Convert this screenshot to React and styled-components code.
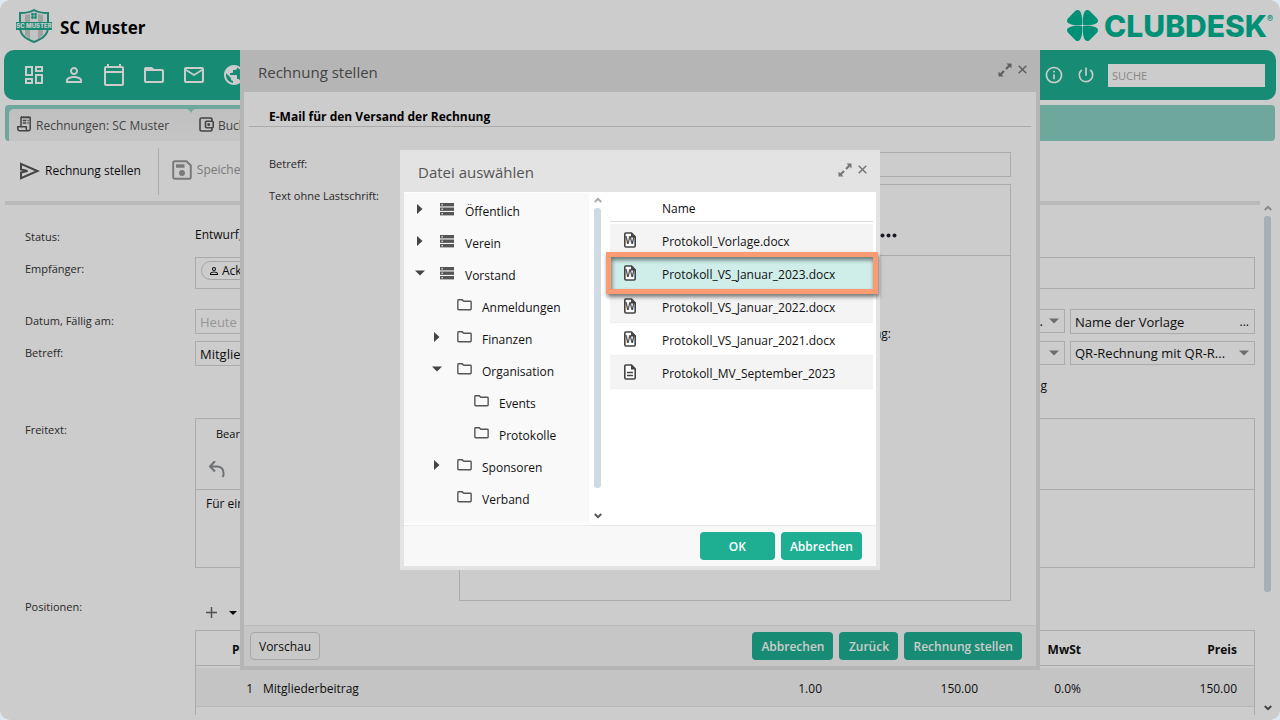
import React from "react"
import styled, { createGlobalStyle } from "styled-components"
import {
  MdOutlineDashboard,
  MdPersonOutline,
  MdOutlineCalendarToday,
  MdFolderOpen,
  MdMailOutline,
  MdPublic,
  MdInfoOutline,
  MdPowerSettingsNew,
} from "react-icons/md"

const GlobalStyle = createGlobalStyle`
  * {
    box-sizing: border-box;
  }
  body {
    margin: 0;
    background: #dde8f3;
    color: #111;
    font-family: "Open Sans", "Noto Sans", sans-serif;
    font-size: 12px;
    line-height: 16px;
  }
  button, input, select {
    font: inherit;
    color: inherit;
  }
  button {
    border: 0;
    padding: 0;
    background: none;
  }
  svg {
    display: block;
    flex: none;
  }
`

/* page shell */

const Page = styled.div`
  height: 100vh;
  display: flex;
  flex-direction: column;
  overflow: hidden;
  border-radius: 10px;
  background: #fff;
`

const Header = styled.header`
  display: flex;
  align-items: center;
  justify-content: space-between;
  height: 50px;
  padding: 0 7px 0 14px;
`

const Club = styled.h1`
  display: flex;
  align-items: center;
  gap: 6px;
  margin: 0;
  padding-top: 2px;
  font-size: 17px;
  font-weight: 700;
  line-height: 24px;
  color: #000;

  span {
    padding-top: 4px;
  }
`

const Brand = styled.a`
  display: flex;
  align-items: center;
  gap: 6px;
  padding-top: 2px;
  color: #00b593;
  font-family: Inter, sans-serif;
  font-size: 30px;
  font-weight: 800;
  line-height: 34px;
  text-decoration: none;

  svg {
    margin-bottom: 2px;
  }
  sup {
    align-self: flex-start;
    margin-left: -6px;
    font-size: 9px;
    font-weight: 600;
    line-height: 20px;
  }
`

const NavBar = styled.nav`
  display: flex;
  align-items: center;
  flex: none;
  height: 50px;
  margin: 0 4px;
  padding: 0 11px 0 10px;
  border-radius: 10px;
  background: #1eae92;
`

const NavButton = styled.button`
  display: grid;
  place-items: center;
  width: ${props => (props.$narrow ? 32 : 40)}px;
  height: 40px;
  color: #fff;
`

const Search = styled.input`
  width: 157px;
  height: 23px;
  margin-left: 6px;
  padding: 0 4px;
  border: 0;
  background: #fff;
  font-size: 11px;

  &::placeholder {
    color: #aaa;
  }
`

const Spacer = styled.div`
  flex: 1;
`

const TabStrip = styled.div`
  display: flex;
  flex: none;
  height: 36px;
  margin: 5px 5px 0;
  padding: 4px 0 0 4px;
  border-radius: 4px;
  background: #8ad1c3;
`

const Tab = styled.button`
  display: flex;
  align-items: center;
  gap: 4px;
  width: ${props => props.$width}px;
  padding: 2px 8px 0;
  border-radius: 5px 5px 0 0;
  background: linear-gradient(#f0f0f0, #f6f6f6);
  color: #555;
  white-space: nowrap;

  svg {
    margin-bottom: 4px;
  }

  & + &::before {
    content: "";
    align-self: center;
    width: 1px;
    height: 20px;
    margin: 0 4px 2px -8px;
    background: #999;
  }
`

const Toolbar = styled.div`
  display: flex;
  align-items: center;
  flex: none;
  height: 60px;
  padding-left: 19px;
`

const ToolButton = styled.button`
  display: flex;
  align-items: center;
  gap: 5px;
  padding-bottom: ${props => (props.disabled ? 3 : 0)}px;
  color: ${props => (props.disabled ? "#999" : "#111")};
`

const ToolDivider = styled.div`
  width: 1px;
  height: 47px;
  margin: 0 13px 0 17px;
  background: #d8d8d8;
`

const ToolLine = styled.div`
  flex: none;
  height: 4px;
  margin: 0 20px 0 5px;
  background: #e8e8e8;
`

const Main = styled.main`
  flex: 1;
  display: flex;
  min-height: 0;
  padding-bottom: 5px;
`

const Form = styled.form`
  flex: 1;
  min-width: 0;
  overflow: hidden;
  padding: 20px 9px 0 25px;
`

const Field = styled.div`
  display: grid;
  grid-template-columns: 170px minmax(0, 1fr);
  min-height: ${props => props.$height}px;
`

const Label = styled.label`
  padding-top: 4px;
  font-size: 11px;
  color: #333;
`

const Value = styled.div`
  padding-top: 2px;
`

const box = `
  border: 1px solid #d6d6d6;
  background: transparent;
`

const TextBox = styled.input`
  ${box}
  width: 100%;
  height: 25px;
  padding: 0 4px;
  font-size: 13px;

  &::placeholder {
    color: #bbb;
  }
`

const TokenBox = styled.div`
  ${box}
  height: 32px;
  padding: 3px 5px;
`

const Token = styled.span`
  display: inline-flex;
  align-items: center;
  gap: 2px;
  height: 19px;
  padding: 0 8px 0 6px;
  border: 1px solid #d0d0d0;
  border-radius: 10px;
`

const Split = styled.div`
  display: grid;
  grid-template-columns: minmax(0, 1fr) 215px 185px;
  align-items: start;
  gap: 5px;
`

const SelectBox = styled.div`
  ${box}
  display: flex;
  align-items: center;
  height: 24px;
  padding-right: 5px;
  color: #888;

  select {
    flex: 1;
    min-width: 0;
    padding: 0 ${props => (props.$right ? 6 : 4)}px 0 4px;
    border: 0;
    background: none;
    appearance: none;
    color: #111;
    font-size: 13px;
    text-align-last: ${props => (props.$right ? "right" : "left")};
  }
`

const PickerBox = styled.div`
  ${box}
  display: flex;
  align-items: center;
  height: 25px;
  padding-right: 5px;

  input {
    flex: 1;
    min-width: 0;
    padding: 0 4px;
    border: 0;
    background: none;
    font-size: 13px;
  }
`

const CheckLabel = styled.label`
  grid-column: 2;
  display: flex;
  align-items: center;
  justify-content: flex-end;
  gap: 4px;
  height: 26px;
  padding-right: 18px;

  input {
    margin: 0;
  }
`

const Editor = styled.div`
  ${box}
  height: ${props => props.$height}px;
`

const EditorTools = styled.div`
  display: flex;
  flex-direction: column;
  justify-content: space-between;
  height: 71px;
  padding: 7px 12px 10px;
  border-bottom: 1px solid #d6d6d6;
`

const EditorMenu = styled.div`
  padding-left: 8px;
  font-size: 11px;
`

const EditorText = styled.p`
  margin: 0;
  padding: 6px 10px;
`

const AddRow = styled.div`
  display: flex;
  align-items: center;
  gap: 12px;
  height: 35px;
  padding: 0 11px;
  color: #111;
`

const TableFrame = styled.div`
  ${box}
  height: 160px;
`

const Positions = styled.table`
  width: 100%;
  border-spacing: 0;
  table-layout: fixed;

  th, td {
    padding: 0 5px;
    text-align: right;
  }
  th {
    height: 35px;
    padding-top: 3px;
    border-bottom: 1px solid #d6d6d6;
  }
  tbody::before {
    content: "";
    display: block;
    height: 2px;
  }
  td {
    height: 39px;
    padding-top: 3px;
    border-bottom: 1px solid #e6e6e6;
    background: #f5f5f5;
  }
  th:nth-child(2), td:nth-child(2) {
    text-align: left;
  }
  th:last-child, td:last-child {
    padding-right: 17px;
  }
`

const ScrollRail = styled.div`
  display: flex;
  flex-direction: column;
  align-items: center;
  width: ${props => (props.$wide ? 16 : 17)}px;
  padding: ${props => (props.$wide ? "0 9px 4px 0" : "5px 0 6px")};
`

const Thumb = styled.div`
  flex: ${props => props.$size} 0 0;
  width: 7px;
  margin: 5px 0;
  border-radius: 3px;
  background: #cfdbe4;
`

const Rest = styled.div`
  flex: ${props => props.$size} 0 0;
`

/* dialogs */

const Overlay = styled.div`
  position: fixed;
  inset: 0;
  display: flex;
  align-items: center;
  justify-content: center;
  border-radius: 10px;
  background: ${props => (props.$dim ? "rgba(0, 0, 0, 0.2)" : "transparent")};
`

const Dialog = styled.section`
  display: flex;
  flex-direction: column;
  width: ${props => props.$width}px;
  max-width: 100%;
  height: ${props => props.$height};
  border: 4px solid #e3e3e3;
  border-top: 0;
  background: #fff;
`

const DialogHead = styled.header`
  display: flex;
  align-items: center;
  flex: none;
  height: 42px;
  padding: 2px 9px 0 14px;
  background: #e3e3e3;
  color: #555;

  h2 {
    flex: 1;
    margin: 0;
    font-size: 15px;
    font-weight: 400;
    line-height: 20px;
  }
`

const HeadButtons = styled.div`
  display: flex;
  align-items: center;
  gap: 6px;
  height: 34px;
  padding-bottom: 5px;
  color: #777;
`

const DialogFoot = styled.footer`
  display: flex;
  gap: 6px;
  flex: none;
  height: 41px;
  padding: 6px 14px 0 6px;
  border-top: 1px solid #ebebeb;
  background: #f8f8f8;
`

const Button = styled.button`
  min-width: ${props => (props.$wide ? 75 : 59)}px;
  height: 28px;
  padding: 2px 9px 0;
  border-radius: 4px;
  background: #1eae92;
  color: #fff;
  font-weight: 600;
`

const PlainButton = styled(Button)`
  padding: 2px 8px 0;
  border: 1px solid #d0d0d0;
  background: #fbfbfb;
  color: #111;
  font-weight: 400;
`

const MailForm = styled.div`
  flex: 1;
  display: flex;
  flex-direction: column;
  min-height: 0;
  padding: 14px 5px 24px;

  h3 {
    margin: 0 0 25px;
    padding: 3px 20px 1px;
    border-bottom: 1px solid #d6d6d6;
    font-size: 12px;
    font-weight: 700;
    line-height: 16px;
    color: #000;
  }
`

const MailField = styled.div`
  flex: ${props => (props.$grow ? 1 : "none")};
  display: grid;
  grid-template-columns: 190px minmax(0, 1fr);
  padding: 0 20px;
  margin-bottom: ${props => (props.$grow ? 0 : 7)}px;
`

const MailEditor = styled.div`
  ${box}
`

const MailTools = styled.div`
  display: flex;
  align-items: center;
  justify-content: flex-end;
  height: 71px;
  padding: 30px 113px 0 0;
  border-bottom: 1px solid #d6d6d6;
  color: #223;
`

const MailText = styled.p`
  margin: 70px 119px 0 10px;
  text-align: right;
`

/* file picker */

const Picker = styled.div`
  flex: 1;
  display: flex;
  min-height: 0;
`

const Tree = styled.ul`
  width: 185px;
  margin: 1px 0 2px;
  padding: 2px 0;
  background: #f9f9f9;
  list-style: none;
`

const TreeItem = styled.li`
  display: grid;
  grid-template-columns: 23px 25px 1fr;
  align-items: center;
  height: 32px;
  padding: 2px 0 0 ${props => 13 + props.$level * 17}px;

  svg {
    margin-bottom: 6px;
    color: #444;
  }
`

const Toggle = styled.span`
  display: flex;
  justify-content: center;
  width: 6px;
`

const Files = styled.table`
  flex: 1;
  align-self: flex-start;
  margin: 0 3px 0 4px;
  border-spacing: 0;

  th {
    height: 30px;
    padding: 4px 0 0;
    border-bottom: 1px solid #dcdcdc;
    font-weight: 400;
    text-align: left;
  }
  th:first-child {
    width: 52px;
  }
  tbody::before {
    content: "";
    display: block;
    height: 2px;
  }
  td {
    height: 33px;
    padding: 4px 0 0;
    border-bottom: 1px solid #eee;
  }
  td:first-child {
    padding: 0 0 0 13px;
  }
`

const FileRow = styled.tr`
  position: relative;
  background: ${props =>
    props.$marked ? "#cfeeea" : props.$striped ? "#f4f4f4" : "#fff"};

  &::after {
    content: ${props => (props.$marked ? '""' : "none")};
    position: absolute;
    z-index: 1;
    inset: -5px -5px -4px -4px;
    border: 5px solid #fa9b73;
    box-shadow: 1px 3px 4px rgba(0, 0, 0, 0.5),
      inset 1px 3px 4px rgba(0, 0, 0, 0.5);
  }
`

/* drawings */

const Shield = () => (
  <svg width="40" height="36" viewBox="0 0 40 36" aria-hidden="true">
    <path
      d="M20 2C15 5 11 5 6 5v14c0 9 7 12 14 15 7-3 14-6 14-15V5c-5 0-9 0-14-3z"
      fill="#f4f4f4"
      stroke="#2aa58f"
      strokeWidth="2"
    />
    <path d="M11 7l5-1v25l-5-4zM24 6l5 1v20l-5 4z" fill="#c6cccb" />
    <g fill="#1eae92">
      <circle cx="18.500" cy="6.500" r="1.400" />
      <circle cx="21.500" cy="6.500" r="1.400" />
      <circle cx="18.500" cy="9.500" r="1.400" />
      <circle cx="21.500" cy="9.500" r="1.400" />
      <rect x="2" y="14" width="36" height="8" />
    </g>
    <text x="20" y="20" textAnchor="middle" fontSize="6" fontWeight="800" fontFamily="Inter, sans-serif" fill="#fff">
      SC MUSTER
    </text>
  </svg>
)

const Clover = () => (
  <svg width="31" height="31" viewBox="0 0 30 30" fill="currentColor" aria-hidden="true">
    {[0, 90, 180, 270].map(turn => (
      <path
        key={turn}
        transform={`rotate(${turn} 15 15)`}
        d="M14.600 14.600C9 15 4 14.600 1 12.500-.5 11-.2 9 1.500 7.500L7.500 1.500C9-.2 11-.5 12.500 1c2.100 3 2.500 8 2.100 13.600z"
      />
    ))}
  </svg>
)

const ReceiptIcon = () => (
  <svg width="15" height="16" viewBox="0 0 15 16" fill="none" stroke="currentColor" strokeWidth="1.500" aria-hidden="true">
    <path d="M4 10.500V1.500h9.200v11.300q0 2-2 2H2.800q-2 0-2-2v-2.100h8.500v2.300q0 1.800 1.900 1.800" />
    <path d="M4 .8h9" strokeDasharray="1.200 1" />
    <path d="M5.800 4.500h3.500M5.800 7h3.500M10.500 4.500h1.200M10.500 7h1.200" />
  </svg>
)

const WalletIcon = () => (
  <svg width="15" height="15" viewBox="0 0 15 15" fill="none" stroke="currentColor" strokeWidth="1.600" aria-hidden="true">
    <path d="M13 4V2.600Q13 1 11.400 1H2.600Q1 1 1 2.600v9.800Q1 14 2.600 14h8.800q1.600 0 1.600-1.600V11" />
    <rect x="6.500" y="4.200" width="7.700" height="6.600" rx="1" />
    <circle cx="9.700" cy="7.500" r=".7" />
  </svg>
)

const SaveIcon = () => (
  <svg width="20" height="20" viewBox="0 0 20 20" fill="none" stroke="currentColor" strokeWidth="2" aria-hidden="true">
    <path d="M1.200 3q0-1.800 1.800-1.800h11.500l4.300 4.300V17q0 1.800-1.800 1.800H3q-1.800 0-1.800-1.800z" />
    <path d="M4 6h8.500" strokeWidth="3.400" />
    <circle cx="10" cy="13" r="2" fill="currentColor" />
  </svg>
)

const SendIcon = () => (
  <svg width="21" height="18" viewBox="0 0 20 18" fill="none" stroke="#555" strokeWidth="2" aria-hidden="true">
    <path d="M1.500 1.800L18 9 1.500 16.200V10.500L8 9 1.500 7.500z" />
  </svg>
)

const UndoIcon = () => (
  <svg width="18" height="18" viewBox="0 0 18 18" fill="none" stroke="#8a8f92" strokeWidth="2" aria-hidden="true">
    <path d="M7 0L2 5.500l5 5M2.500 5.500h7c4 0 6.500 3 6 8.500l-1 2" />
  </svg>
)

const PlusIcon = () => (
  <svg width="11" height="11" viewBox="0 0 11 11" stroke="#666" strokeWidth="1.500" aria-hidden="true">
    <path d="M5.500 0v11M0 5.500h11" />
  </svg>
)

const Caret = ({ size = 10 }) => (
  <svg width={size} height="6" viewBox="0 0 10 6" fill="currentColor" aria-hidden="true">
    <path d="M0 .5h10L5 5.500z" />
  </svg>
)

const CaretRight = () => (
  <svg width="6" height="10" viewBox="0 0 6 10" fill="currentColor" aria-hidden="true">
    <path d="M0 0l5.500 5L0 10z" />
  </svg>
)

const Chevron = ({ down }) => (
  <svg width="8" height="6" viewBox="0 0 8 6" fill="none" stroke={down ? "#555" : "#aaa"} strokeWidth="2" aria-hidden="true">
    <path d={down ? "M.8 1L4 4.200 7.200 1" : "M.8 5L4 1.800 7.200 5"} />
  </svg>
)

const Expand = () => (
  <svg width="14" height="14" viewBox="0 0 14 14" fill="currentColor" aria-hidden="true">
    <path d="M8.500 .5h5v5l-1.700-1.700-3 3-1.600-1.600 3-3zM5.500 13.500h-5v-5l1.700 1.700 3-3 1.600 1.600-3 3z" />
  </svg>
)

const Close = () => (
  <svg width="9" height="9" viewBox="0 0 9 9" stroke="currentColor" strokeWidth="1.500" aria-hidden="true">
    <path d="M.7 .7l7.600 7.600M8.300 .7L.7 8.300" />
  </svg>
)

const Dots = () => (
  <svg width="17" height="5" viewBox="0 0 17 5" fill="currentColor" aria-hidden="true">
    <circle cx="2.500" cy="2.500" r="2" />
    <circle cx="8.500" cy="2.500" r="2" />
    <circle cx="14.500" cy="2.500" r="2" />
  </svg>
)

const DriveIcon = () => (
  <svg width="14" height="13" viewBox="0 0 14 13" aria-hidden="true">
    {[0, 4.500, 9].map(y => (
      <g key={y}>
        <rect y={y} width="14" height="3.400" fill="#555" />
        <rect x="1.500" y={y + 1.100} width="1.300" height="1.300" fill="#fff" />
      </g>
    ))}
  </svg>
)

const FolderIcon = () => (
  <svg width="15" height="12" viewBox="0 0 16 13" fill="none" stroke="#555" strokeWidth="1.500" aria-hidden="true">
    <path d="M.8 1.600q0-.8.8-.8h4l1.500 1.600h7.300q.8 0 .8.8v7.600q0 .8-.8.800H1.600q-.8 0-.8-.8z" />
  </svg>
)

const FileIcon = ({ word }) => (
  <svg width="14" height="16" viewBox="0 0 14 16" aria-hidden="true">
    <path
      d="M2.800 1h5.700L12.200 4.800V13.800q0 1.200-1.200 1.200H3q-1.200 0-1.200-1.200V2q0-1 1-1z"
      fill="#fff"
      stroke="#444"
      strokeWidth="1.600"
    />
    <path d="M8 1v4.500h4.500z" fill="#444" />
    {word ? (
      <text x="7" y="12" textAnchor="middle" fontSize="10" fontWeight="600" fill="#333">
        W
      </text>
    ) : (
      <path d="M4 8.500h6M4 11.500h6" stroke="#444" strokeWidth="1.300" />
    )}
  </svg>
)

const navItems = [
  ["Dashboard", MdOutlineDashboard],
  ["Kontakte", MdPersonOutline],
  ["Termine", MdOutlineCalendarToday],
  ["Dateien", MdFolderOpen],
  ["E-Mail", MdMailOutline],
  ["Webseite", MdPublic],
]

const tree = [
  { name: "Öffentlich", level: 0, state: "closed" },
  { name: "Verein", level: 0, state: "closed" },
  { name: "Vorstand", level: 0, state: "open" },
  { name: "Anmeldungen", level: 1 },
  { name: "Finanzen", level: 1, state: "closed" },
  { name: "Organisation", level: 1, state: "open" },
  { name: "Events", level: 2 },
  { name: "Protokolle", level: 2 },
  { name: "Sponsoren", level: 1, state: "closed" },
  { name: "Verband", level: 1 },
]

const files = [
  "Protokoll_Vorlage.docx",
  "Protokoll_VS_Januar_2023.docx",
  "Protokoll_VS_Januar_2022.docx",
  "Protokoll_VS_Januar_2021.docx",
  "Protokoll_MV_September_2023",
]

const DialogTitle = ({ children }) => (
  <DialogHead>
    <h2>{children}</h2>
    <HeadButtons>
      <button type="button" aria-label="Maximieren"><Expand /></button>
      <button type="button" aria-label="Schliessen"><Close /></button>
    </HeadButtons>
  </DialogHead>
)

const InvoiceForm = () => (
  <Form>
    <Field $height={32}>
      <Label as="span">Status:</Label>
      <Value>Entwurf,</Value>
    </Field>
    <Field $height={52}>
      <Label as="span">Empfänger:</Label>
      <TokenBox>
        <Token>
          <MdPersonOutline size={12} />
          Acker
        </Token>
      </TokenBox>
    </Field>
    <Field $height={32}>
      <Label htmlFor="date">Datum, Fällig am:</Label>
      <Split>
        <TextBox id="date" placeholder="Heute" />
        <SelectBox $right>
          <select aria-label="Konto"><option>Konto...</option></select>
          <Caret />
        </SelectBox>
        <PickerBox>
          <input aria-label="Vorlage" defaultValue="Name der Vorlage" />
          <button type="button" aria-label="Vorlage wählen">...</button>
        </PickerBox>
      </Split>
    </Field>
    <Field $height={32}>
      <Label htmlFor="subject">Betreff:</Label>
      <Split>
        <TextBox id="subject" defaultValue="Mitgliederbeitrag" />
        <SelectBox $right>
          <select aria-label="Zahlungsart"><option></option></select>
          <Caret />
        </SelectBox>
        <SelectBox>
          <select aria-label="Rechnungsart"><option>QR-Rechnung mit QR-R...</option></select>
          <Caret />
        </SelectBox>
      </Split>
    </Field>
    <Field $height={45}>
      <span />
      <Split>
        <CheckLabel>
          <input type="checkbox" />
          Rechnung
        </CheckLabel>
      </Split>
    </Field>
    <Field $height={177}>
      <Label as="span">Freitext:</Label>
      <Editor $height={150}>
        <EditorTools>
          <EditorMenu>Bearbeiten</EditorMenu>
          <UndoIcon />
        </EditorTools>
        <EditorText>Für eine</EditorText>
      </Editor>
    </Field>
    <Field>
      <Label as="span">Positionen:</Label>
      <div>
        <AddRow>
          <PlusIcon />
          <Caret size={8} />
        </AddRow>
        <TableFrame>
          <Positions>
            <colgroup>
              <col width="62" />
              <col />
              <col width="120" />
              <col width="156" />
              <col width="103" />
              <col width="168" />
            </colgroup>
            <thead>
              <tr>
                <th>Pos</th>
                <th aria-label="Titel" />
                <th aria-label="Menge" />
                <th aria-label="Einzelpreis" />
                <th>MwSt</th>
                <th>Preis</th>
              </tr>
            </thead>
            <tbody>
              <tr>
                <td>1</td>
                <td>Mitgliederbeitrag</td>
                <td>1.00</td>
                <td>150.00</td>
                <td>0.0%</td>
                <td>150.00</td>
              </tr>
            </tbody>
          </Positions>
        </TableFrame>
      </div>
    </Field>
  </Form>
)

const InvoiceDialog = () => (
  <Dialog $width={800} $height="calc(100vh - 100px)">
    <DialogTitle>Rechnung stellen</DialogTitle>
    <MailForm>
      <h3>E-Mail für den Versand der Rechnung</h3>
      <MailField>
        <Label htmlFor="mail-subject">Betreff:</Label>
        <TextBox id="mail-subject" />
      </MailField>
      <MailField $grow>
        <Label as="span">Text ohne Lastschrift:</Label>
        <MailEditor>
          <MailTools><Dots /></MailTools>
          <MailText>Rechnung:</MailText>
        </MailEditor>
      </MailField>
    </MailForm>
    <DialogFoot>
      <PlainButton>Vorschau</PlainButton>
      <Spacer />
      <Button>Abbrechen</Button>
      <Button>Zurück</Button>
      <Button>Rechnung stellen</Button>
    </DialogFoot>
  </Dialog>
)

const FileDialog = () => (
  <Dialog $width={480} $height="420px">
    <DialogTitle>Datei auswählen</DialogTitle>
    <Picker>
      <Tree>
        {tree.map(item => (
          <TreeItem key={item.name} $level={item.level}>
            <Toggle>
              {item.state === "closed" && <CaretRight />}
              {item.state === "open" && <Caret />}
            </Toggle>
            {item.level === 0 ? <DriveIcon /> : <FolderIcon />}
            {item.name}
          </TreeItem>
        ))}
      </Tree>
      <ScrollRail>
        <Chevron />
        <Thumb $size={280} />
        <Rest $size={20} />
        <Chevron down />
      </ScrollRail>
      <Files>
        <thead>
          <tr>
            <th aria-label="Typ" />
            <th>Name</th>
          </tr>
        </thead>
        <tbody>
          {files.map((name, i) => (
            <FileRow key={name} $striped={i % 2 === 0} $marked={i === 1}>
              <td><FileIcon word={name.endsWith(".docx")} /></td>
              <td>{name}</td>
            </FileRow>
          ))}
        </tbody>
      </Files>
    </Picker>
    <DialogFoot>
      <Spacer />
      <Button $wide>OK</Button>
      <Button>Abbrechen</Button>
    </DialogFoot>
  </Dialog>
)

const App = () => {
  return (
    <>
      <GlobalStyle />
      <Page>
        <Header>
          <Club>
            <Shield />
            <span>SC Muster</span>
          </Club>
          <Brand href="#">
            <Clover />
            CLUBDESK
            <sup>®</sup>
          </Brand>
        </Header>
        <NavBar>
          {navItems.map(([label, Icon]) => (
            <NavButton key={label} aria-label={label}>
              <Icon size={24} />
            </NavButton>
          ))}
          <Spacer />
          <NavButton $narrow aria-label="Info"><MdInfoOutline size={20} /></NavButton>
          <NavButton $narrow aria-label="Abmelden"><MdPowerSettingsNew size={20} /></NavButton>
          <Search placeholder="SUCHE" aria-label="Suche" />
        </NavBar>
        <TabStrip>
          <Tab $width={182}>
            <ReceiptIcon />
            Rechnungen: SC Muster
          </Tab>
          <Tab $width={80}>
            <WalletIcon />
            Buch
          </Tab>
        </TabStrip>
        <Toolbar>
          <ToolButton>
            <SendIcon />
            Rechnung stellen
          </ToolButton>
          <ToolDivider />
          <ToolButton disabled>
            <SaveIcon />
            Speichern
          </ToolButton>
        </Toolbar>
        <ToolLine />
        <Main>
          <InvoiceForm />
          <ScrollRail $wide>
            <Chevron />
            <Thumb $size={377} />
            <Rest $size={108} />
            <Chevron down />
          </ScrollRail>
        </Main>
      </Page>
      <Overlay>
        <InvoiceDialog />
      </Overlay>
      <Overlay $dim>
        <FileDialog />
      </Overlay>
    </>
  )
}

export default App
